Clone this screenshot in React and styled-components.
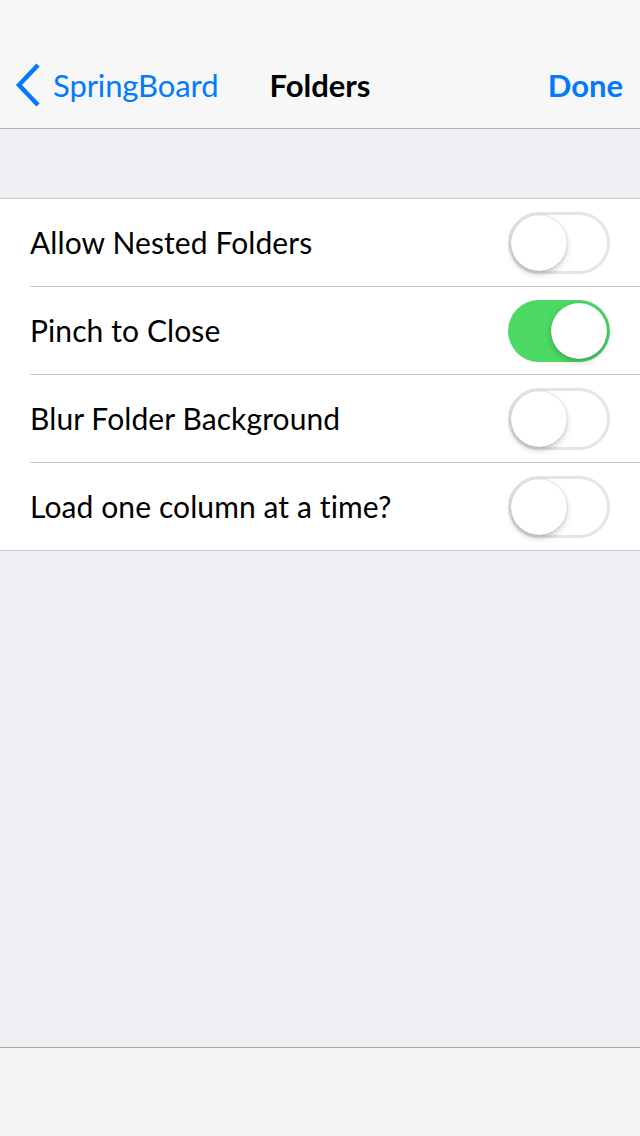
import React, { useState } from "react";
import styled, { createGlobalStyle } from "styled-components";

const GlobalStyle = createGlobalStyle`
  html, body {
    margin: 0;
    padding: 0;
    background: #efeff4;
  }
  body {
    font-family: Lato, "Noto Sans", "Liberation Sans", sans-serif;
  }
`;

const settings = [
  { id: "nested", label: "Allow Nested Folders", on: false },
  { id: "pinch", label: "Pinch to Close", on: true },
  { id: "blur", label: "Blur Folder Background", on: false },
  { id: "column", label: "Load one column at a time?", on: false },
];

const App = () => {
  const [values, setValues] = useState(
    settings.reduce((acc, cur) => ({ ...acc, [cur.id]: cur.on }), {})
  );

  const toggle = (id) => setValues((prev) => ({ ...prev, [id]: !prev[id] }));

  return (
    <Screen>
      <GlobalStyle />
      <NavBar>
        <BackButton>
          <svg width="28" height="44" viewBox="0 0 28 44">
            <path
              d="M24 2 L5 22 L24 42"
              fill="none"
              stroke="#007aff"
              strokeWidth="4.5"
              strokeLinecap="butt"
              strokeLinejoin="miter"
            />
          </svg>
          <span>SpringBoard</span>
        </BackButton>
        <NavTitle>Folders</NavTitle>
        <DoneButton>Done</DoneButton>
      </NavBar>
      <Content>
        <Group>
          {settings.map((item) => (
            <Row key={item.id}>
              <Label>{item.label}</Label>
              <Switch $on={values[item.id]} onClick={() => toggle(item.id)}>
                <Knob $on={values[item.id]} />
              </Switch>
            </Row>
          ))}
        </Group>
      </Content>
      <Toolbar />
    </Screen>
  );
};

const Screen = styled.div`
  width: 640px;
  height: 1136px;
  display: flex;
  flex-direction: column;
  background: #efeff4;
  overflow: hidden;
`;

const NavBar = styled.div`
  height: 129px;
  flex-shrink: 0;
  box-sizing: border-box;
  padding-top: 41px;
  background: #f7f7f7;
  border-bottom: 1px solid #b2b2b2;
  display: grid;
  grid-template-columns: 1fr auto 1fr;
  align-items: center;
`;

const BackButton = styled.div`
  display: flex;
  align-items: center;
  gap: 11px;
  padding-left: 14px;
  color: #007aff;
  font-size: 31px;
  letter-spacing: -0.1px;
  svg {
    display: block;
  }
`;

const NavTitle = styled.div`
  font-size: 31px;
  font-weight: 700;
  color: #000;
`;

const DoneButton = styled.div`
  justify-self: end;
  padding-right: 17px;
  font-size: 31px;
  font-weight: 700;
  color: #007aff;
`;

const Content = styled.div`
  flex: 1;
  padding-top: 69px;
  border-bottom: 1px solid #a7a7aa;
`;

const Group = styled.div`
  background: #fff;
  border-top: 1px solid #c8c7cc;
  border-bottom: 1px solid #c8c7cc;
`;

const Row = styled.div`
  height: 87px;
  margin-left: 30px;
  padding-right: 30px;
  display: flex;
  align-items: center;
  justify-content: space-between;
  border-bottom: 1px solid #c8c7cc;
  &:last-child {
    border-bottom: none;
  }
`;

const Label = styled.div`
  font-size: 30px;
  color: #000;
  letter-spacing: 0.1px;
  padding-bottom: 2px;
`;

const Switch = styled.div`
  position: relative;
  width: 102px;
  height: 62px;
  box-sizing: border-box;
  border-radius: 31px;
  background: ${(p) => (p.$on ? "#4cd964" : "#fff")};
  border: ${(p) => (p.$on ? "none" : "3px solid #e5e5e5")};
  cursor: pointer;
`;

const Knob = styled.div`
  position: absolute;
  top: ${(p) => (p.$on ? "3px" : "0")};
  left: ${(p) => (p.$on ? "43px" : "0")};
  width: 56px;
  height: 56px;
  border-radius: 50%;
  background: #fff;
  box-shadow: 0 3px 6px rgba(0, 0, 0, 0.22), 0 0 1px rgba(0, 0, 0, 0.3);
`;

const Toolbar = styled.div`
  height: 88px;
  flex-shrink: 0;
  background: #f5f5f5;
`;

export default App;
